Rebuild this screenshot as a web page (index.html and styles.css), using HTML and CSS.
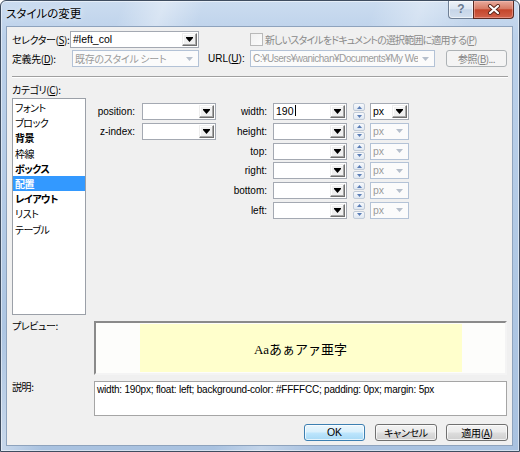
FILE: index.html
```html
<!DOCTYPE html>
<html lang="ja">
<head>
<meta charset="utf-8">
<title>スタイルの変更</title>
<link rel="stylesheet" href="styles.css">
</head>
<body>
<div class="window">
  <div class="titlebar">
    <span class="title">スタイルの変更</span>
    <div class="caption">
      <div class="cap-help">?</div>
      <div class="cap-close">
        <svg width="14" height="11" viewBox="0 0 14 11"><path d="M3 2 L11 9 M11 2 L3 9" stroke="#5b2418" stroke-width="4" stroke-linecap="round"/><path d="M3 2 L11 9 M11 2 L3 9" stroke="#fff" stroke-width="2.2" stroke-linecap="round"/></svg>
      </div>
    </div>
  </div>
  <div class="client">
    <div class="row r1">
      <span class="lbl l-sel">セレクター(<u>S</u>):</span>
      <div class="combo c-sel"><span class="val">#left_col</span><span class="dd"><svg width="7" height="5" viewBox="0 0 7 5"><path d="M0 0H7V1H0Z M0 1H7L3.5 5Z" fill="#000"/></svg></span></div>
      <div class="chk"><span class="box"></span><span class="chk-text">新しいスタイルをドキュメントの選択範囲に適用する(<u>P</u>)</span></div>
    </div>
    <div class="row r2">
      <span class="lbl l-def">定義先(<u>D</u>):</span>
      <div class="combo dis c-def"><span class="val">既存のスタイル シート</span><span class="dd"><svg width="7" height="4" viewBox="0 0 7 4"><path d="M0 0H7L3.5 4Z" fill="#b6bfcc"/></svg></span></div>
      <span class="lbl l-url">URL(<u>U</u>):</span>
      <div class="combo dis c-url"><span class="val">C:¥Users¥wanichan¥Documents¥My We</span><span class="dd"><svg width="7" height="4" viewBox="0 0 7 4"><path d="M0 0H7L3.5 4Z" fill="#b6bfcc"/></svg></span></div>
      <div class="btn btn-dis b-browse">参照(<u>B</u>)...</div>
    </div>
    <div class="sep"></div>
    <div class="cat-label">カテゴリ(<u>C</u>):</div>
    <div class="middle">
      <ul class="list">
        <li>フォント</li>
        <li>ブロック</li>
        <li class="b">背景</li>
        <li>枠線</li>
        <li class="b">ボックス</li>
        <li class="b sel">配置</li>
        <li class="b">レイアウト</li>
        <li>リスト</li>
        <li>テーブル</li>
      </ul>
      <div class="props">
        <div class="grid-left">
          <span class="plbl">position:</span>
          <div class="combo c-prop"><span class="val"></span><span class="dd"><svg width="7" height="5" viewBox="0 0 7 5"><path d="M0 0H7V1H0Z M0 1H7L3.5 5Z" fill="#000"/></svg></span></div>
          <span class="plbl">z-index:</span>
          <div class="combo c-prop"><span class="val"></span><span class="dd"><svg width="7" height="5" viewBox="0 0 7 5"><path d="M0 0H7V1H0Z M0 1H7L3.5 5Z" fill="#000"/></svg></span></div>
        </div>
        <div class="grid-right">
          <span class="plbl">width:</span>
          <div class="combo c-prop"><span class="val">190<span class="caret"></span></span><span class="dd"><svg width="7" height="5" viewBox="0 0 7 5"><path d="M0 0H7V1H0Z M0 1H7L3.5 5Z" fill="#000"/></svg></span></div>
          <div class="spin"><span class="up"><svg width="5" height="3" viewBox="0 0 5 3"><path d="M0 3H5L2.5 0Z" fill="#5a7db5"/></svg></span><span class="down"><svg width="5" height="3" viewBox="0 0 5 3"><path d="M0 0H5L2.5 3Z" fill="#5a7db5"/></svg></span></div>
          <div class="combo c-unit"><span class="val">px</span><span class="dd"><svg width="7" height="5" viewBox="0 0 7 5"><path d="M0 0H7V1H0Z M0 1H7L3.5 5Z" fill="#000"/></svg></span></div>

          <span class="plbl">height:</span>
          <div class="combo c-prop"><span class="val"></span><span class="dd"><svg width="7" height="5" viewBox="0 0 7 5"><path d="M0 0H7V1H0Z M0 1H7L3.5 5Z" fill="#000"/></svg></span></div>
          <div class="spin"><span class="up"><svg width="5" height="3" viewBox="0 0 5 3"><path d="M0 3H5L2.5 0Z" fill="#5a7db5"/></svg></span><span class="down"><svg width="5" height="3" viewBox="0 0 5 3"><path d="M0 0H5L2.5 3Z" fill="#5a7db5"/></svg></span></div>
          <div class="combo dis c-unit"><span class="val">px</span><span class="dd"><svg width="7" height="4" viewBox="0 0 7 4"><path d="M0 0H7L3.5 4Z" fill="#b6bfcc"/></svg></span></div>

          <span class="plbl">top:</span>
          <div class="combo c-prop"><span class="val"></span><span class="dd"><svg width="7" height="5" viewBox="0 0 7 5"><path d="M0 0H7V1H0Z M0 1H7L3.5 5Z" fill="#000"/></svg></span></div>
          <div class="spin"><span class="up"><svg width="5" height="3" viewBox="0 0 5 3"><path d="M0 3H5L2.5 0Z" fill="#5a7db5"/></svg></span><span class="down"><svg width="5" height="3" viewBox="0 0 5 3"><path d="M0 0H5L2.5 3Z" fill="#5a7db5"/></svg></span></div>
          <div class="combo dis c-unit"><span class="val">px</span><span class="dd"><svg width="7" height="4" viewBox="0 0 7 4"><path d="M0 0H7L3.5 4Z" fill="#b6bfcc"/></svg></span></div>

          <span class="plbl">right:</span>
          <div class="combo c-prop"><span class="val"></span><span class="dd"><svg width="7" height="5" viewBox="0 0 7 5"><path d="M0 0H7V1H0Z M0 1H7L3.5 5Z" fill="#000"/></svg></span></div>
          <div class="spin"><span class="up"><svg width="5" height="3" viewBox="0 0 5 3"><path d="M0 3H5L2.5 0Z" fill="#5a7db5"/></svg></span><span class="down"><svg width="5" height="3" viewBox="0 0 5 3"><path d="M0 0H5L2.5 3Z" fill="#5a7db5"/></svg></span></div>
          <div class="combo dis c-unit"><span class="val">px</span><span class="dd"><svg width="7" height="4" viewBox="0 0 7 4"><path d="M0 0H7L3.5 4Z" fill="#b6bfcc"/></svg></span></div>

          <span class="plbl">bottom:</span>
          <div class="combo c-prop"><span class="val"></span><span class="dd"><svg width="7" height="5" viewBox="0 0 7 5"><path d="M0 0H7V1H0Z M0 1H7L3.5 5Z" fill="#000"/></svg></span></div>
          <div class="spin"><span class="up"><svg width="5" height="3" viewBox="0 0 5 3"><path d="M0 3H5L2.5 0Z" fill="#5a7db5"/></svg></span><span class="down"><svg width="5" height="3" viewBox="0 0 5 3"><path d="M0 0H5L2.5 3Z" fill="#5a7db5"/></svg></span></div>
          <div class="combo dis c-unit"><span class="val">px</span><span class="dd"><svg width="7" height="4" viewBox="0 0 7 4"><path d="M0 0H7L3.5 4Z" fill="#b6bfcc"/></svg></span></div>

          <span class="plbl">left:</span>
          <div class="combo c-prop"><span class="val"></span><span class="dd"><svg width="7" height="5" viewBox="0 0 7 5"><path d="M0 0H7V1H0Z M0 1H7L3.5 5Z" fill="#000"/></svg></span></div>
          <div class="spin"><span class="up"><svg width="5" height="3" viewBox="0 0 5 3"><path d="M0 3H5L2.5 0Z" fill="#5a7db5"/></svg></span><span class="down"><svg width="5" height="3" viewBox="0 0 5 3"><path d="M0 0H5L2.5 3Z" fill="#5a7db5"/></svg></span></div>
          <div class="combo dis c-unit"><span class="val">px</span><span class="dd"><svg width="7" height="4" viewBox="0 0 7 4"><path d="M0 0H7L3.5 4Z" fill="#b6bfcc"/></svg></span></div>
        </div>
      </div>
    </div>
    <div class="row preview-row">
      <span class="lbl l-side">プレビュー:</span>
      <div class="preview"><div class="sample">Aaあぁアァ亜字</div></div>
    </div>
    <div class="row desc-row">
      <span class="lbl l-side">説明:</span>
      <div class="desc">width: 190px; float: left; background-color: #FFFFCC; padding: 0px; margin: 5px</div>
    </div>
    <div class="buttons">
      <div class="btn btn-def">OK</div>
      <div class="btn">キャンセル</div>
      <div class="btn">適用(<u>A</u>)</div>
    </div>
  </div>
</div>
</body>
</html>
```
FILE: styles.css
```css
* { box-sizing: border-box; margin: 0; padding: 0; }
html, body { width: 520px; height: 452px; overflow: hidden; }
body {
  font-family: "Liberation Sans", "Noto Sans CJK JP", sans-serif;
  font-size: 10px;
  color: #000;
  background: #ffffff;
  font-feature-settings: "palt";
}
u { text-decoration: underline; }

.window {
  width: 520px;
  height: 452px;
  border: 1px solid #3f4d60;
  border-radius: 6px 6px 0 0;
  background:
    linear-gradient(110deg, rgba(255,255,255,0) 18%, rgba(255,255,255,0.35) 24%, rgba(255,255,255,0) 30%, rgba(255,255,255,0) 55%, rgba(255,255,255,0.3) 62%, rgba(255,255,255,0) 70%),
    linear-gradient(180deg, #cbdcf0 0%, #bcd1ea 8%, #b0c8e4 60%, #a9c2e0 100%);
  display: flex;
  flex-direction: column;
  box-shadow: inset 0 0 0 1px rgba(255,255,255,0.5);
}

.titlebar {
  height: 25px;
  display: flex;
  align-items: flex-start;
  flex-shrink: 0;
}
.title {
  font-family: "Noto Sans CJK JP", sans-serif;
  font-size: 11.5px;
  line-height: 16px;
  padding: 4px 0 0 5px;
  color: #000;
  text-shadow: 0 0 6px rgba(255,255,255,0.9);
}
.caption {
  margin-left: auto;
  margin-right: 5px;
  display: flex;
}
.cap-help {
  width: 25px;
  height: 18px;
  border: 1px solid #6f7f95;
  border-top: none;
  border-right: none;
  border-radius: 0 0 0 4px;
  background: linear-gradient(180deg, #eef3f9 0%, #dbe5f1 45%, #c6d5e8 52%, #d3dfee 100%);
  box-shadow: inset 0 0 0 1px rgba(255,255,255,0.6);
  color: #6a7a90;
  font-size: 12px;
  font-weight: bold;
  line-height: 17px;
  text-align: center;
}
.cap-close {
  width: 41px;
  height: 18px;
  border: 1px solid #5b2a22;
  border-top: none;
  border-radius: 0 0 4px 0;
  background: linear-gradient(180deg, #e8ab9d 0%, #d77b65 45%, #c4452b 52%, #d1624a 100%);
  box-shadow: inset 0 0 0 1px rgba(255,200,190,0.45);
  display: flex;
  align-items: center;
  justify-content: center;
}

.client {
  margin: 0 6px 5px 5px;
  height: 420px;
  border: 1px solid #8ea3bd;
  background: #f0f0f0;
  padding: 3px 4px 0 5px;
  display: flex;
  flex-direction: column;
}

.row { display: flex; align-items: center; }
.r1 { height: 18px; }
.r2 { height: 17px; margin-top: 2px; }

.lbl {
  font-family: "Noto Sans CJK JP", sans-serif;
  font-size: 10px;
  letter-spacing: -0.4px;
  white-space: nowrap;
  flex-shrink: 0;
}
.l-sel { width: 58px; }
.l-def { width: 60px; }
.l-url { width: 42px; margin-left: 9px; font-family: "Liberation Sans", "Noto Sans CJK JP", sans-serif; letter-spacing: 0; }
.l-side { width: 82px; align-self: flex-start; }

/* combo boxes */
.combo {
  display: flex;
  height: 17px;
  border: 1px solid #a4a9b2;
  background: #fff;
  flex-shrink: 0;
}
.combo .val {
  flex: 1;
  min-width: 0;
  overflow: hidden;
  white-space: nowrap;
  padding-left: 2px;
  line-height: 15px;
  font-size: 10.5px;
}
.combo .dd {
  width: 15px;
  margin: 1px 1px 1px 0;
  border: 1px solid;
  border-color: #eeeeee #6f6f6f #6f6f6f #eeeeee;
  box-shadow: inset -1px -1px 0 #a8a8a8, inset 1px 1px 0 #ffffff;
  background: #f0f0f0;
  display: flex;
  align-items: center;
  justify-content: center;
  flex-shrink: 0;
}
.combo.dis {
  border-color: #b3c2d6;
  background: #fbfbfb;
  color: #9c9c9c;
}
.combo.dis .dd {
  border-color: transparent;
  box-shadow: none;
  background: transparent;
}
.combo.dis .val {
  font-family: "Noto Sans CJK JP", sans-serif;
  font-size: 10px;
  letter-spacing: -0.3px;
}
.c-sel { width: 129px; }
.c-def { width: 127px; }
.c-url { width: 185px; }
.c-url .val { font-family: "Liberation Sans", "Noto Sans CJK JP", sans-serif !important; letter-spacing: -0.5px !important; }
.c-prop { width: 74px; }
.c-unit { width: 39px; }
.c-unit .val { font-family: "Liberation Sans", sans-serif !important; font-size: 10.5px !important; letter-spacing: 0 !important; }

.caret {
  display: inline-block;
  width: 1px;
  height: 11px;
  background: #000;
  vertical-align: -1px;
  margin-left: 1px;
}

/* checkbox */
.chk {
  display: flex;
  align-items: center;
  margin-left: 51px;
  color: #8a8a8a;
}
.chk .box {
  width: 13px;
  height: 13px;
  border: 1px solid #b9b9b9;
  background: linear-gradient(135deg, #f0f0f0, #fbfbfb);
  margin-right: 2px;
  flex-shrink: 0;
}
.chk-text {
  font-family: "Noto Sans CJK JP", sans-serif;
  font-size: 10px;
  letter-spacing: -0.85px;
  white-space: nowrap;
}

/* buttons */
.btn {
  height: 17px;
  border: 1px solid #707070;
  border-radius: 3px;
  background: linear-gradient(180deg, #f2f2f2 0%, #ebebeb 48%, #dddddd 52%, #cfcfcf 100%);
  box-shadow: inset 0 0 0 1px rgba(255,255,255,0.7);
  font-family: "Noto Sans CJK JP", sans-serif;
  font-size: 10px;
  letter-spacing: -0.3px;
  line-height: 15px;
  text-align: center;
  white-space: nowrap;
  flex-shrink: 0;
}
.btn-dis {
  border-color: #adb2b5;
  background: #f4f4f4;
  color: #838383;
  box-shadow: none;
}
.b-browse { width: 61px; margin-left: 11px; letter-spacing: -0.6px; }
.btn-def {
  border-color: #3c7fb1;
  background: linear-gradient(180deg, #eaf6fd 0%, #d9f0fc 48%, #bee6fd 52%, #a7d9f5 100%);
  font-family: "Liberation Sans", sans-serif;
  font-size: 10.5px;
  letter-spacing: 0;
}

.sep {
  margin-top: 9px;
  height: 2px;
  border-top: 1px solid #a0a0a0;
  border-bottom: 1px solid #ffffff;
  flex-shrink: 0;
}
.cat-label {
  margin-top: 5px;
  height: 13px;
  line-height: 13px;
  font-family: "Noto Sans CJK JP", sans-serif;
  font-size: 10px;
  letter-spacing: -0.4px;
}

.middle {
  display: flex;
  margin-top: 2px;
  height: 217px;
  flex-shrink: 0;
}
.list {
  list-style: none;
  width: 74px;
  height: 217px;
  border: 1px solid #9ba0a8;
  background: #fff;
  padding-top: 1px;
  flex-shrink: 0;
}
.list li {
  height: 15.2px;
  line-height: 15px;
  padding-left: 2px;
  font-family: "Noto Sans CJK JP", sans-serif;
  font-size: 10px;
  letter-spacing: -0.5px;
  white-space: nowrap;
}
.list li.b { font-weight: bold; }
.list li.sel { background: #3399ff; color: #fff; }

.props {
  display: flex;
  align-items: flex-start;
  margin-left: 8px;
  padding-top: 5px;
}
.grid-left {
  display: grid;
  grid-template-columns: 41px 74px;
  grid-auto-rows: 17px;
  row-gap: 2.8px;
  column-gap: 7px;
  align-items: center;
}
.grid-right {
  display: grid;
  grid-template-columns: 46px 77px 16px 39px;
  grid-auto-rows: 17px;
  row-gap: 2.8px;
  align-items: center;
  margin-left: 11px;
}
.grid-right .plbl { margin-right: 6px; }
.grid-right .spin { margin-left: 3px; }
.grid-right .c-unit { margin-left: 4px; }
.plbl {
  text-align: right;
  font-size: 10px;
  white-space: nowrap;
}

.spin {
  width: 12px;
  height: 17px;
  display: flex;
  flex-direction: column;
  gap: 1px;
}
.spin span {
  flex: 1;
  border: 1px solid #c1cbd8;
  border-radius: 2px;
  background: linear-gradient(180deg, #f7f9fc, #dfe7f1);
  display: flex;
  align-items: center;
  justify-content: center;
}

.preview-row { margin-top: 6px; align-items: flex-start; }
.preview-row .l-side { line-height: 12px; margin-top: -1px; }
.preview {
  width: 413px;
  height: 54px;
  border: 2px solid;
  border-color: #8a8a8a #f4f4f4 #f4f4f4 #8a8a8a;
  background: #fdfdfb;
  display: flex;
  align-items: center;
  justify-content: center;
}
.sample {
  width: 322px;
  height: 48px;
  background: #ffffcc;
  display: flex;
  align-items: center;
  justify-content: center;
  font-family: "Liberation Serif", "Noto Sans CJK JP", serif;
  font-size: 13px;
  font-feature-settings: normal;
}

.desc-row { margin-top: 6px; align-items: flex-start; }
.desc-row .l-side { line-height: 12px; margin-top: 0; }
.desc {
  width: 413px;
  height: 35px;
  border: 1px solid #a5a5a5;
  background: #fff;
  padding: 1px 2px;
  font-size: 10px;
  letter-spacing: -0.2px;
  line-height: 13px;
  white-space: nowrap;
}

.buttons {
  display: flex;
  justify-content: flex-end;
  gap: 9px;
  margin-top: 8px;
}
.buttons .btn { width: 62px; }
.buttons .btn-def { width: 61px; margin-right: 1px; }
```
